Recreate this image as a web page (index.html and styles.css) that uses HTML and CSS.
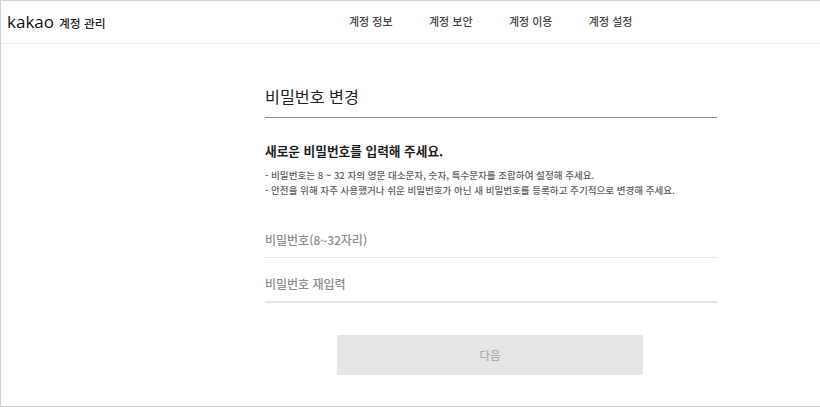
FILE: index.html
```html
<!DOCTYPE html>
<html lang="ko">
<head>
<meta charset="utf-8">
<title>비밀번호 변경</title>
<link rel="stylesheet" href="styles.css">
</head>
<body>
<div class="frame">
  <header class="topbar">
    <div class="brand"><span class="logo">kakao</span><span class="brand-sub">계정 관리</span></div>
    <nav class="nav">
      <a class="nav-item">계정 정보</a>
      <a class="nav-item">계정 보안</a>
      <a class="nav-item">계정 이용</a>
      <a class="nav-item">계정 설정</a>
    </nav>
  </header>
  <main class="content">
    <h1 class="title">비밀번호 변경</h1>
    <h2 class="lead">새로운 비밀번호를 입력해 주세요.</h2>
    <ul class="notes">
      <li>- 비밀번호는 8 ~ 32 자의 영문 대소문자, 숫자, 특수문자를 조합하여 설정해 주세요.</li>
      <li>- 안전을 위해 자주 사용했거나 쉬운 비밀번호가 아닌 새 비밀번호를 등록하고 주기적으로 변경해 주세요.</li>
    </ul>
    <div class="field">비밀번호(8~32자리)</div>
    <div class="field field-second">비밀번호 재입력</div>
    <div class="actions"><button class="next" type="button">다음</button></div>
  </main>
</div>
</body>
</html>
```
FILE: styles.css
```css
* { box-sizing: border-box; }
html, body { margin: 0; padding: 0; }
body {
  width: 820px;
  height: 407px;
  overflow: hidden;
  background: #fff;
  font-family: "Noto Sans CJK KR", "Noto Sans", sans-serif;
}
.frame {
  width: 820px;
  height: 407px;
  border-top: 1px solid #ccd3dc;
  border-left: 1px solid #ccd3dc;
  border-bottom: 1px solid #c8c8c8;
  overflow: hidden;
}
.topbar {
  height: 43px;
  border-bottom: 1px solid #eeeeee;
  display: flex;
  align-items: center;
  padding: 0 0 2px 6px;
}
.brand { display: flex; align-items: baseline; gap: 5px; width: 342px; }
.logo { font-family: "Open Sans", sans-serif; font-size: 17px; color: #111; }
.brand-sub { font-size: 11.8px; font-weight: 500; color: #222; }
.nav { display: flex; gap: 36.4px; }
.nav-item { font-size: 11px; font-weight: 500; color: #444; }
.content {
  width: 452px;
  margin-left: 264px;
}
.title {
  margin: 0;
  padding-top: 39px;
  height: 74px;
  border-bottom: 1px solid #8e8e8e;
  font-size: 16.2px;
  line-height: 27px;
  font-weight: 400;
  color: #222;
}
.lead {
  margin: 23px 0 0;
  font-size: 12.7px;
  line-height: 20px;
  font-weight: 700;
  color: #1e1e1e;
}
.notes {
  list-style: none;
  margin: 7px 0 0;
  padding: 0;
  font-size: 9.55px;
  line-height: 15px;
  font-weight: 500;
  color: #5c5c5c;
}
.field {
  margin-top: 32px;
  height: 28px;
  border-bottom: 1px solid #e6e6e6;
  font-size: 12px;
  line-height: 20px;
  font-weight: 500;
  color: #8c8c8c;
}
.field-second { margin-top: 16px; border-bottom-width: 2px; height: 29px; }
.actions { display: flex; justify-content: center; margin-top: 32px; padding-right: 2px; }
.next {
  width: 306px;
  height: 40px;
  border: 0;
  border-radius: 2px;
  padding: 0;
  background: #e5e5e5;
  color: #aeaeae;
  font: 500 11.5px "Noto Sans CJK KR", sans-serif;
}
```
